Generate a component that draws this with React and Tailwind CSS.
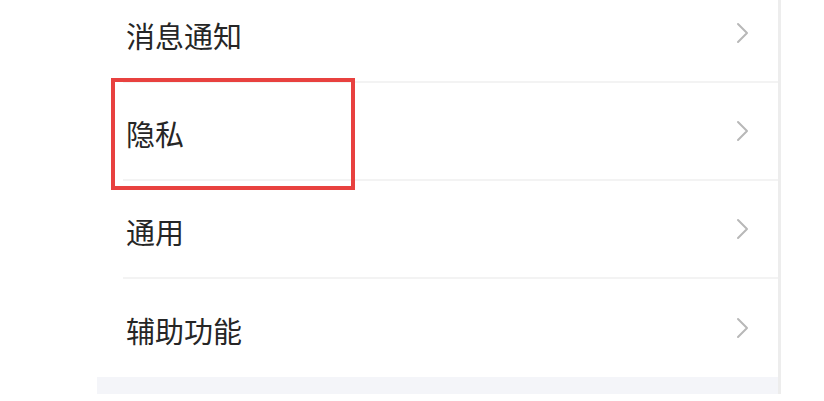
import React from 'react'

const items = ['消息通知', '隐私', '通用', '辅助功能']

function Chevron() {
  return (
    <svg width="14" height="22" viewBox="0 0 14 22" fill="none">
      <polyline points="2,2 11,11 2,20" stroke="#b8b8b8" strokeWidth="2" strokeLinecap="round" strokeLinejoin="round" />
    </svg>
  )
}

export default function App() {
  return (
    <div className="relative h-[401px] w-[824px] overflow-hidden bg-white" style={{ fontFamily: '"Noto Sans CJK SC", "Noto Sans", sans-serif' }}>
      {/* 设置列表 */}
      <div className="ml-[97px] w-[684px] border-r-[3px] border-[#ededed] bg-white">
        <div className="-mt-[15px]">
          {items.map((label, i) => (
            <div
              key={label}
              className={`ml-[26px] flex h-[98px] items-center justify-between pl-[3px] pr-[28px] ${i < items.length - 1 ? 'border-b-2 border-[#f3f3f3]' : ''}`}
            >
              <span className="pt-[5px] text-[29px] leading-none text-[#262626]">{label}</span>
              <Chevron />
            </div>
          ))}
        </div>
        <div className="h-[17px] bg-[#f4f5f9]"></div>
      </div>

      {/* 红色标注框 */}
      <div className="absolute left-[111px] top-[78px] h-[112px] w-[244px] border-4 border-[#e8413f]"></div>
    </div>
  )
}
